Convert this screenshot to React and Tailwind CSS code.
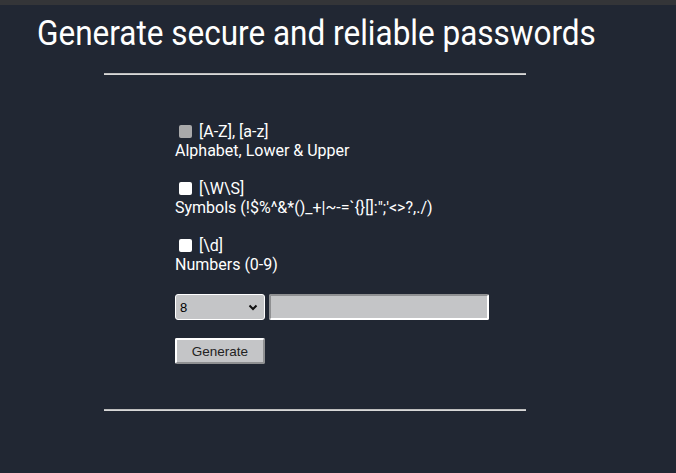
import React from "react";

function Check({ disabled }) {
  return (
    <span
      className={
        "inline-block w-[13px] h-[13px] rounded-[2px] ml-[4px] mr-[7px] align-[-1px] " +
        (disabled ? "bg-[#a9a9aa]" : "bg-white")
      }
    />
  );
}

export default function App() {
  return (
    <div className="w-full min-h-[473px] bg-[#212733] text-white font-['Roboto',sans-serif]">
      <div className="h-[5px] bg-[#343538]" />
      <h1 className="ml-[37px] pt-[8px] text-[35px] leading-[41px] font-normal scale-x-[0.9] origin-left whitespace-nowrap">
        Generate secure and reliable passwords
      </h1>
      <div className="mt-[19px] ml-[104px] w-[422px] h-[2px] bg-[#d8d8d8] border-t border-[#bdbdbd]" />
      <div className="pl-[175px] pt-[47px] text-[16px] leading-[19px]">
        <div className="flex items-center h-[19px]">
          <Check disabled />
          <span>[A-Z], [a-z]</span>
        </div>
        <div>Alphabet, Lower &amp; Upper</div>
        <div className="h-[19px]" />
        <div className="flex items-center h-[19px]">
          <Check />
          <span>[\W\S]</span>
        </div>
        <div>Symbols (!$%^&amp;*()_+|~-=`{"{}"}[]:";'&lt;&gt;?,./)</div>
        <div className="h-[19px]" />
        <div className="flex items-center h-[19px]">
          <Check />
          <span>[\d]</span>
        </div>
        <div>Numbers (0-9)</div>
        <div className="h-[20px]" />
        <div className="flex gap-[4px]">
          <div className="w-[90px] h-[26px] rounded-[3px] border border-white bg-[#c4c5c7] flex items-center justify-between pl-[4px] pr-[6px] font-['Liberation_Sans',sans-serif] text-[13px] text-black">
            <span>8</span>
            <svg width="10" height="7" viewBox="0 0 10 7">
              <path d="M1.5 1.5 L5 5 L8.5 1.5" stroke="#111" strokeWidth="2" fill="none" />
            </svg>
          </div>
          <div className="w-[220px] h-[26px] rounded-[2px] bg-[#c4c5c7] border-2 border-t-[#8f9092] border-l-[#8f9092] border-r-white border-b-white" />
        </div>
        <div className="h-[18px]" />
        <div className="w-[90px] h-[26px] bg-[#c4c5c7] border-2 border-t-white border-l-white border-r-[#8f9092] border-b-[#8f9092] rounded-[2px] flex items-center justify-center font-['Liberation_Sans',sans-serif] text-[13.5px] text-[#222]">
          Generate
        </div>
      </div>
      <div className="mt-[45px] ml-[104px] w-[422px] h-[2px] bg-[#d8d8d8] border-t border-[#bdbdbd]" />
    </div>
  );
}
